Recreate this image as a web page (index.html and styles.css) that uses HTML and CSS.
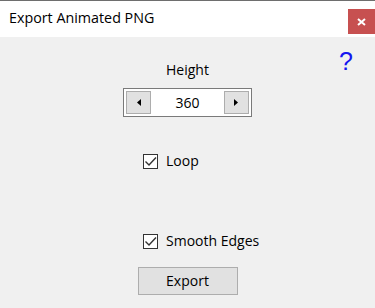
FILE: index.html
```html
<!DOCTYPE html>
<html>
<head>
<meta charset="utf-8">
<link rel="stylesheet" href="styles.css">
</head>
<body>
<div class="window">
  <div class="titlebar">
    <span class="title">Export Animated PNG</span>
    <div class="close"><svg width="9" height="8" viewBox="0 0 9 8"><path d="M1 1 L8 7 M8 1 L1 7" stroke="#fff" stroke-width="2"/></svg></div>
  </div>
  <div class="content">
    <div class="help">?</div>
    <div class="label">Height</div>
    <div class="spinner">
      <div class="spin-btn"><svg width="4" height="7" viewBox="0 0 4 7"><path d="M4 0 L0 3.5 L4 7 Z" fill="#000"/></svg></div>
      <div class="spin-value">360</div>
      <div class="spin-btn"><svg width="4" height="7" viewBox="0 0 4 7"><path d="M0 0 L4 3.5 L0 7 Z" fill="#000"/></svg></div>
    </div>
    <label class="check check-loop"><span class="box"><svg width="13" height="13" viewBox="0 0 13 13"><path d="M1.5 6.5 L5 10 L12 2.5" fill="none" stroke="#333" stroke-width="1.4"/></svg></span><span>Loop</span></label>
    <label class="check check-smooth"><span class="box"><svg width="13" height="13" viewBox="0 0 13 13"><path d="M1.5 6.5 L5 10 L12 2.5" fill="none" stroke="#333" stroke-width="1.4"/></svg></span><span>Smooth Edges</span></label>
    <div class="button">Export</div>
  </div>
</div>
</body>
</html>
```
FILE: styles.css
```css
html, body {
  margin: 0;
  padding: 0;
  background: #f0f0f0;
}
body {
  font-family: "Open Sans", "Noto Sans", sans-serif;
  font-size: 14px;
  color: #000;
  width: 375px;
  height: 308px;
  overflow: hidden;
}
.window {
  display: flex;
  flex-direction: column;
  height: 308px;
}
.titlebar {
  height: 36px;
  background: #fff;
  border-top: 1px solid #6e6e6e;
  display: flex;
  justify-content: space-between;
  align-items: flex-start;
}
.title {
  margin-left: 9px;
  margin-top: 7px;
  font-size: 14.3px;
  line-height: 20px;
}
.close {
  width: 27px;
  height: 25px;
  margin-top: 8px;
  background: #c75050;
  display: flex;
  align-items: center;
  justify-content: center;
}
.content {
  display: flex;
  flex-direction: column;
  align-items: center;
}
.help {
  align-self: flex-end;
  margin-right: 22px;
  margin-top: 12px;
  height: 10px;
  font-family: "Liberation Sans", sans-serif;
  font-size: 25px;
  line-height: 25px;
  color: #1515f0;
}
.label {
  margin-top: 1px;
  line-height: 20px;
  font-size: 14px;
}
.spinner {
  margin-top: 8px;
  width: 123px;
  height: 27px;
  border: 1px solid #7a7a7a;
  background: #fff;
  display: flex;
  align-items: center;
  justify-content: space-between;
  padding: 0 2px 0 2px;
  box-sizing: content-box;
}
.spin-btn {
  width: 23px;
  height: 21px;
  border: 1px solid #adadad;
  background: #e1e1e1;
  display: flex;
  align-items: center;
  justify-content: center;
}
.spin-value {
  font-size: 14px;
  line-height: 20px;
}
.check {
  align-self: flex-start;
  display: flex;
  align-items: center;
  gap: 8px;
  margin-left: 143px;
  line-height: 20px;
  white-space: nowrap;
}
.check-loop {
  margin-top: 34px;
}
.check-smooth {
  margin-top: 60px;
}
.box {
  width: 13px;
  height: 13px;
  border: 1px solid #333;
  background: #fff;
  display: flex;
}
.button {
  margin-top: 16px;
  width: 98px;
  height: 26px;
  border: 1px solid #adadad;
  background: #e1e1e1;
  display: flex;
  align-items: center;
  justify-content: center;
  line-height: 20px;
}
```
